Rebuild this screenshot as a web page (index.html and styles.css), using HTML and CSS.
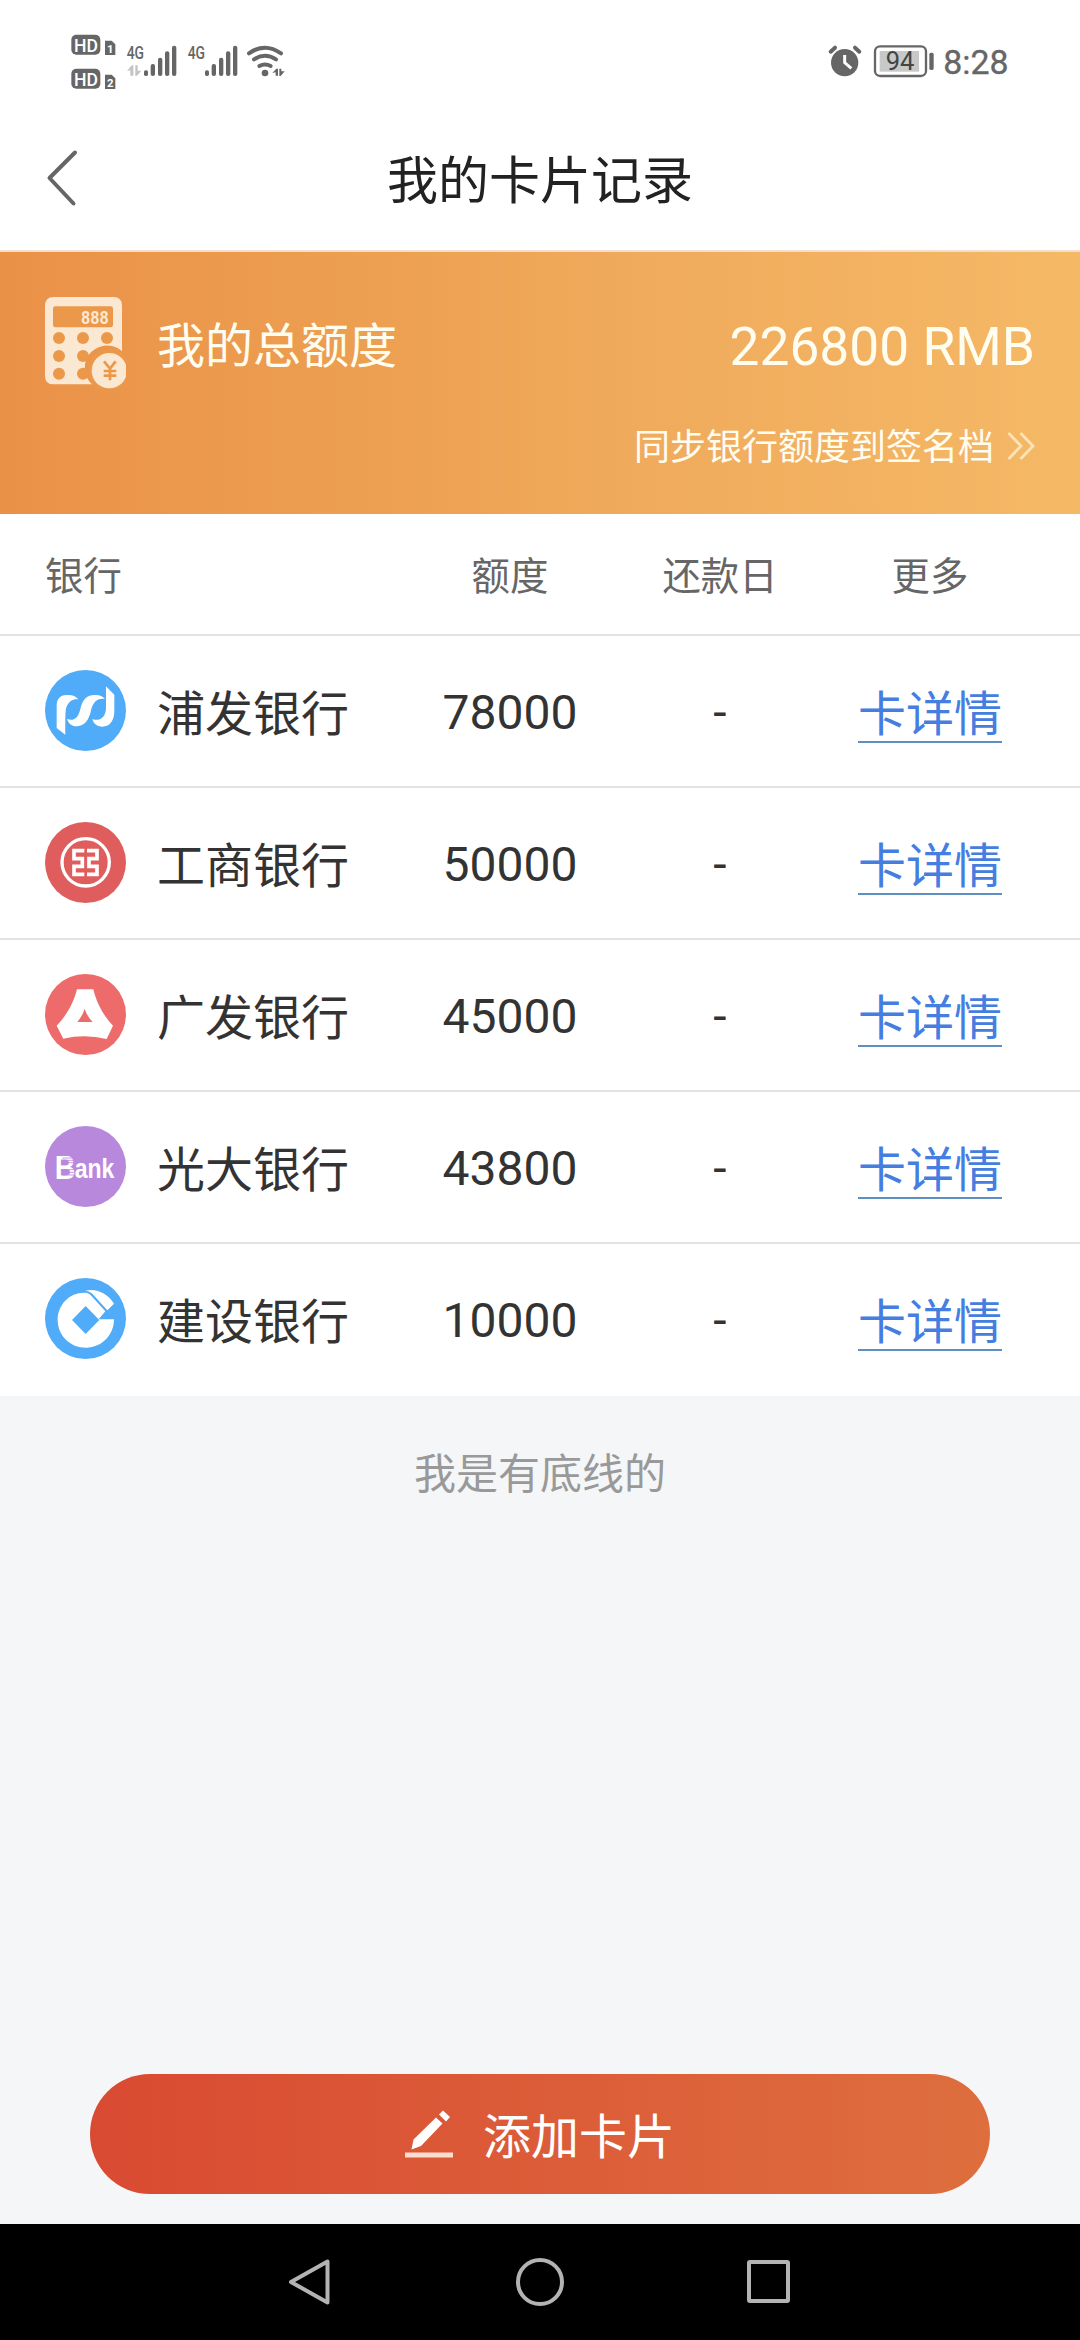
FILE: index.html
```html
<!DOCTYPE html>
<html lang="zh-CN">
<head>
<meta charset="utf-8">
<title>我的卡片记录</title>
<link rel="stylesheet" href="styles.css">
</head>
<body>
<div class="screen">
  <div class="status">
    <svg class="status-left" viewBox="0 0 780 240" fill="#666">
      <rect x="64" y="44" width="87" height="60" rx="15"/>
      <text x="72" y="95" class="hd" textLength="72" lengthAdjust="spacingAndGlyphs">HD</text>
      <path d="M165 62h20l11 11v32h-31z"/>
      <text x="171" y="99" class="sim">1</text>
      <rect x="64" y="146" width="87" height="60" rx="15"/>
      <text x="72" y="197" class="hd" textLength="72" lengthAdjust="spacingAndGlyphs">HD</text>
      <path d="M165 164h20l11 11v32h-31z"/>
      <text x="171" y="201" class="sim">2</text>
      <text x="230" y="117" class="net" textLength="52" lengthAdjust="spacingAndGlyphs">4G</text>
      <path fill="#c4c4c4" d="M231 153l14-17h5v31h-9v-16zM256 136h7v16h11l-13 15h-5z"/>
      <g id="bars"><rect x="282" y="151" width="12" height="17" rx="5"/><rect x="302" y="132" width="13" height="36" rx="6"/><rect x="324" y="113" width="13" height="55" rx="6"/><rect x="345" y="94" width="13" height="74" rx="6"/><rect x="366" y="77" width="13" height="91" rx="6"/></g>
      <text x="413" y="117" class="net" textLength="52" lengthAdjust="spacingAndGlyphs">4G</text>
      <use href="#bars" x="183"/>
      <g fill="none" stroke="#666" stroke-width="12" stroke-linecap="round"><path d="M597 100q48-34 96 0"/><path d="M612 118q33-21 66 0"/><path d="M628 138q17-9 34 0"/></g>
      <circle cx="645" cy="159" r="10"/>
      <path d="M667 159l12-13h5v21h-7v-10zM688 146h6v8h10l-12 14h-4z"/>
    </svg>
    <svg class="status-right" viewBox="0 0 660 240" fill="#666">
      <circle cx="134" cy="128" r="41"/>
      <path fill="none" stroke="#666" stroke-width="12" stroke-linecap="round" d="M92 95l13-12M165 83l13 12"/>
      <path fill="none" stroke="#fff" stroke-width="9" d="M134 105v23l20 17"/>
      <rect x="225" y="79" width="153" height="89" rx="15" fill="none" stroke="#666" stroke-width="7"/>
      <rect x="239" y="93" width="118" height="62" fill="#c8c8c8"/>
      <text x="257" y="149" class="batt" textLength="86" lengthAdjust="spacingAndGlyphs">94</text>
      <rect x="388" y="98" width="13" height="52" rx="5"/>
      <text x="430" y="161" class="clock" textLength="196" lengthAdjust="spacingAndGlyphs">8:28</text>
    </svg>
  </div>

  <div class="titlebar">
    <svg class="back" viewBox="0 0 36 60"><path d="M30 4.500L4.500 30L28.500 55.500"/></svg>
    <h1>我的卡片记录</h1>
  </div>

  <section class="banner">
    <div class="total">
      <svg class="calc" viewBox="135 140 243 276" fill="#fbe8d2">
        <path d="M161 140h179q26 0 26 26v137a64 64 0 0 0-90 99h-115q-26 0-26-26v-210q0-26 26-26z"/>
        <g fill="#eb984b"><rect x="159" y="168" width="180" height="63" rx="7"/><circle cx="177" cy="263" r="18"/><circle cx="249" cy="263" r="18"/><circle cx="321" cy="263" r="18"/><circle cx="177" cy="317" r="18"/><circle cx="249" cy="317" r="18"/><circle cx="177" cy="370" r="18"/><circle cx="249" cy="370" r="18"/><circle cx="330" cy="361" r="66"/></g>
        <text x="243" y="222" class="digits" textLength="83" lengthAdjust="spacingAndGlyphs">888</text>
        <circle cx="328" cy="361" r="53"/>
        <path d="M312 333l18 22 17-22M330 355v35M311 362h38M311 376h38" fill="none" stroke="#eb984b" stroke-width="8"/>
      </svg>
      <span class="total-label">我的总额度</span>
      <span class="total-value">226800 RMB</span>
    </div>
    <div class="sync">
      <span class="sync-label">同步银行额度到签名档</span>
      <svg class="more" viewBox="0 0 28 28"><path d="M1.500 1l12.500 13L1.500 27M13.500 1L26 14L13.500 27"/></svg>
    </div>
  </section>

  <section class="table">
    <div class="row head"><span>银行</span><span>额度</span><span>还款日</span><span>更多</span></div>
    <div class="row">
      <div class="bank">
        <svg viewBox="135 90 243 243"><circle cx="256.500" cy="211.500" r="121.500" fill="#50acf8"/>
          <g fill="#fff"><path d="M170 264V198C170 177 179 165 200 165C217 164 227 168 235 178C220 176 208 183 202 196C196 205 196 219 196 284Z"/><path d="M201 237C222 245 235 233 241 207C248 177 262 165 283 165C298 164 307 168 315 177C297 174 282 180 274 207C267 241 255 256 232 259C215 259 206 252 201 237Z"/><path d="M277 237C299 246 318 231 318 203V139L343 164V213C343 241 330 260 307 260C291 260 281 251 277 237Z"/></g></svg>
        <span>浦发银行</span>
      </div><span class="num">78000</span><span class="num">-</span><a class="detail">卡详情</a>
    </div>
    <div class="row">
      <div class="bank">
        <svg viewBox="135 546 243 243"><circle cx="256.500" cy="667.500" r="121.500" fill="#df5d5d"/>
          <g fill="none" stroke="#fff"><circle cx="257" cy="667" r="71" stroke-width="10"/><path stroke-width="11" d="M253 632H222V656H247V679H222V709M222 703H253M261 632H291V656H267V679H291V703H261"/></g></svg>
        <span>工商银行</span>
      </div><span class="num">50000</span><span class="num">-</span><a class="detail">卡详情</a>
    </div>
    <div class="row">
      <div class="bank">
        <svg viewBox="135 42 243 243"><circle cx="256.500" cy="163.500" r="121.500" fill="#ed6b6a"/>
          <path fill="#fff" fill-rule="evenodd" d="M231 88H280C288 124 309 166 339 197L320 237Q254 221 190 236L170 197C201 166 222 125 231 88ZM254 147Q247 168 232 186H278Q262 170 254 147Z"/></svg>
        <span>广发银行</span>
      </div><span class="num">45000</span><span class="num">-</span><a class="detail">卡详情</a>
    </div>
    <div class="row">
      <div class="bank">
        <svg viewBox="135 498 243 243"><circle cx="256.500" cy="619.500" r="121.500" fill="#b888dd"/>
          <text x="164" y="656" class="ebank" font-size="102" textLength="62" lengthAdjust="spacingAndGlyphs">B</text>
          <path d="M187 594H223M187 601H223M187 608H224M187 629H224M187 637H224M187 645H224" stroke="#b888dd" stroke-width="2.500"/>
          <text x="224" y="655" class="ebank" font-size="85" textLength="119" lengthAdjust="spacingAndGlyphs">ank</text></svg>
        <span>光大银行</span>
      </div><span class="num">43800</span><span class="num">-</span><a class="detail">卡详情</a>
    </div>
    <div class="row">
      <div class="bank">
        <svg viewBox="135 954 243 243"><circle cx="256.500" cy="1075.500" r="121.500" fill="#50acf8"/>
          <path fill="#fff" d="M316 1054L296 1078H342C342 1125 306 1163 258 1163C211 1163 173 1127 173 1079C173 1033 210 996 256 998Q264 998 271 1004Z"/>
          <path fill="#50acf8" d="M257 1038L298 1080L257 1122L216 1080Z"/>
          <path fill="#fff" d="M256 992C291 984 324 1002 342 1031L322 1051L277 1001Q267 992 256 992Z"/></svg>
        <span>建设银行</span>
      </div><span class="num">10000</span><span class="num">-</span><a class="detail">卡详情</a>
    </div>
  </section>

  <main class="rest">
    <p>我是有底线的</p>
    <button class="add">
      <svg viewBox="0 0 48 48" fill="#fff"><path d="M31 7.500L37.500 13.500L16 36L6.500 39.500L8.500 29.500ZM34 4.500L38 .5L45 7L41 11.500Z"/><path d="M0 42.500h48v5H0z" fill="#fbdcd0"/></svg>
      <span>添加卡片</span>
    </button>
  </main>

  <nav class="softkeys">
    <svg viewBox="0 0 48 50"><path d="M40.500 4.500V45.500L4 25Z"/></svg>
    <svg viewBox="0 0 50 50"><circle cx="25" cy="25" r="22"/></svg>
    <svg viewBox="0 0 50 50"><rect x="5" y="5" width="39" height="39" rx="1"/></svg>
  </nav>
</div>
</body>
</html>
```
FILE: styles.css
```css
* { box-sizing: border-box; }
body { margin: 0; font-family: Roboto, "Noto Sans CJK SC", sans-serif; color: #333; }
h1, p { margin: 0; font-weight: 400; }
svg { display: block; flex: none; }
.screen { width: 1080px; height: 2340px; display: flex; flex-direction: column; background: #fff; }

.status { height: 111px; padding: 20px 60px 0 50px; display: flex; justify-content: space-between; }
.status-left { width: 260px; height: 80px; }
.status-right { width: 220px; height: 80px; }
.hd { font: 500 53px Roboto, sans-serif; fill: #fff; }
.sim { font: 700 34px Roboto, sans-serif; fill: #fff; }
.net { font: 500 54px Roboto, sans-serif; }
.batt { font: 400 76px Roboto, sans-serif; fill: #444; }
.clock { font: 400 100px Roboto, sans-serif; fill: #666; stroke: #666; stroke-width: 1px; }

.titlebar { height: 141px; padding: 0 45px; border-bottom: 2px solid #f3dfcb; display: grid; grid-template-columns: 60px 1fr 60px; align-items: center; }
.back { width: 36px; height: 60px; margin-top: -6px; }
.back path { fill: none; stroke: #666; stroke-width: 4; stroke-linecap: round; stroke-linejoin: round; }
.titlebar h1 { padding-top: 2px; font-size: 51px; line-height: 60px; color: #222; text-align: center; }

.banner { height: 262px; padding: 45px 45px 0; background: linear-gradient(90deg, #ea9148, #eda052 36%, #f0ab5c 60%, #f5b966); color: #fffdf0; }
.total { height: 92px; display: flex; align-items: center; }
.calc { width: 81px; height: 92px; margin-right: 31px; }
.digits { font: 700 60px "Liberation Mono", monospace; fill: #fbe8d2; }
.total-label { flex: 1; padding-top: 8px; font-size: 48px; line-height: 60px; }
.total-value { padding-top: 8px; font-size: 53.300px; line-height: 60px; }
.sync { margin-top: 27px; height: 60px; display: flex; justify-content: flex-end; align-items: center; gap: 13px; font-size: 36px; line-height: 56px; }
.sync-label { padding-top: 4px; }
.more { width: 28px; height: 28px; }
.more path { fill: none; stroke: #fce3b8; stroke-width: 2.800; }

.row { height: 152px; padding: 0 45px; display: grid; grid-template-columns: 360px repeat(3, 210px); align-items: center; justify-items: center; border-bottom: 2px solid #e3e3e3; font-size: 48px; line-height: 60px; color: #333; }
.row > :first-child { justify-self: start; }
.row:last-child { border-bottom-color: #fff; }
.head { height: 122px; padding-top: 5px; font-size: 38.400px; color: #666; }
.bank { display: flex; align-items: center; gap: 31px; }
.bank svg { width: 81px; height: 81px; margin-bottom: 1px; }
.bank span { padding-top: 7px; }
.num { padding-top: 3px; }
.ebank { font-family: "Liberation Sans", sans-serif; font-weight: 700; fill: #fff; }
.detail { height: 64px; padding-top: 6px; line-height: 60px; color: #457ee0; border-bottom: 2px solid #5d8fc0; }

.rest { flex: 1; background: #f4f6f8; display: flex; flex-direction: column; justify-content: space-between; align-items: center; padding: 53px 90px 30px; }
.rest p { font-size: 42px; line-height: 52px; color: #999; }
.add { width: 900px; height: 120px; padding: 0; border: 0; border-radius: 60px; background: linear-gradient(90deg, #d94a32, #de6e3e); color: #fff; font: inherit; font-size: 48px; line-height: 60px; display: flex; align-items: center; justify-content: center; gap: 30px; }
.add svg { width: 48px; height: 48px; }
.add span { padding-top: 7px; }

.softkeys { height: 116px; background: #000; display: flex; align-items: center; justify-content: center; gap: 179px; }
.softkeys svg { width: 50px; height: 50px; fill: none; stroke: #b3b3b3; stroke-width: 4; stroke-linejoin: round; }
```
